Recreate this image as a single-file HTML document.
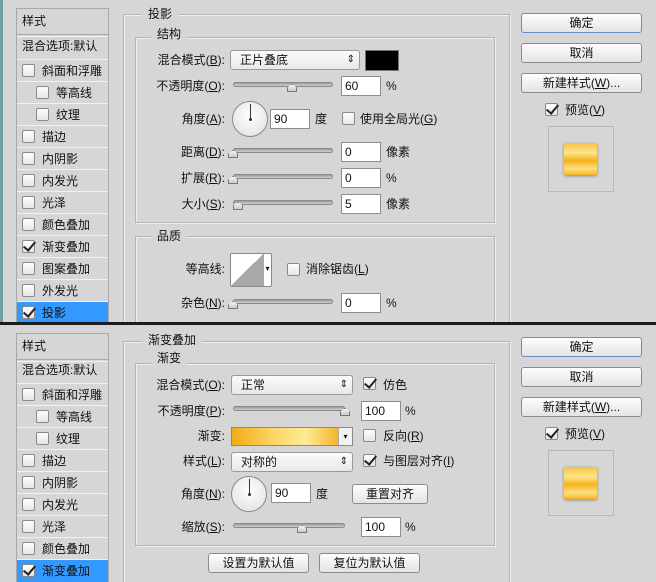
<!DOCTYPE html>
<html style="width:656px;height:582px;overflow:hidden"><head><meta charset="utf-8"><style>
*{margin:0;padding:0;box-sizing:border-box}
body{width:656px;height:582px;background:#d6d6d6;position:relative;overflow:hidden;font-family:"Liberation Sans","Noto Sans CJK SC",sans-serif;font-size:12px;color:#111}
.a{position:absolute}
.wrap{position:absolute;left:0;top:0;width:656px;height:582px;overflow:hidden}
.t{position:absolute;white-space:nowrap;line-height:14px;font-size:12px}
.r{text-align:right;width:120px}
.box{position:absolute;border:1px solid #b4b4b4;box-shadow:inset 1px 1px 0 #efefef,1px 1px 0 #efefef}
.gl{position:absolute;background:#d6d6d6;padding:0 6px;line-height:14px;font-size:12px}
.side{position:absolute;left:16px;width:93px;background:#d6d6d6;border:1px solid #a8a8a8}
.row{position:absolute;left:0;width:91px;height:22px;border-top:1px solid #f2f2f2}
.cb{position:absolute;width:13px;height:13px;border:1px solid #8a8a8a;border-radius:2px;background:linear-gradient(#fdfdfd,#e6e6e6)}
.ck::after{content:"";position:absolute;left:3px;top:-2px;width:5px;height:10px;border-right:2px solid #222;border-bottom:2px solid #222;transform:rotate(40deg)}
.inp{position:absolute;height:20px;background:#fff;border:1px solid #8e8e8e;padding-left:3px;line-height:18px;font-size:12px}
.sel{position:absolute;height:20px;background:linear-gradient(#fbfbfb,#e9e9e9);border:1px solid #9a9a9a;border-radius:3px;padding-left:9px;line-height:18px}
.sel::after{content:"⇕";position:absolute;right:4px;top:0;font-size:10px}
.sl{position:absolute;height:5px;border-radius:3px;background:linear-gradient(#9c9c9c,#cfcfcf);border:1px solid #8a8a8a}
.th{position:absolute;width:10px;height:8px;background:linear-gradient(#f4f4f4,#cacaca);border:1px solid #777;clip-path:polygon(50% 0,100% 45%,100% 100%,0 100%,0 45%)}
.btn{position:absolute;height:20px;border:1px solid #8c8c8c;border-radius:3px;background:linear-gradient(#fdfdfd,#e4e4e4);text-align:center;line-height:18px}
.dial{position:absolute;width:36px;height:36px;border-radius:50%;border:1px solid #8a8a8a;background:radial-gradient(circle at 50% 40%,#fff,#dedede)}
.dial::before{content:"";position:absolute;left:17px;top:2px;width:1px;height:15px;background:#333}
.dial::after{content:"";position:absolute;left:16px;top:16px;width:3px;height:3px;border-radius:50%;background:#333}
.gsw{position:absolute;width:33px;height:32px;background:linear-gradient(#f6c344,#fde58a 30%,#f5b21c 55%,#fde07e 80%,#f3b52a);box-shadow:0 1px 3px #888}
.pv{position:absolute;width:66px;height:66px;border:1px solid #b8b8b8}
u{text-decoration:underline}
</style></head><body>
<div class="wrap" style="clip-path:inset(0 0 260px 0)">
<div class="a" style="left:0;top:0;width:3px;height:322px;background:#6fa0a5"></div>

<div class="side" style="top:8px;height:320px">
 <div class="t" style="left:5px;top:5px">样式</div>
 <div class="a" style="left:0;top:25px;width:91px;border-top:1px solid #a8a8a8;border-bottom:1px solid #f2f2f2;height:3px"></div>
 <div class="t" style="left:5px;top:30px">混合选项:默认</div>
 <div class="row" style="top:50px"><div class="cb" style="left:5px;top:4px"></div><div class="t" style="left:25px;top:4px">斜面和浮雕</div></div>
 <div class="row" style="top:72px"><div class="cb" style="left:19px;top:4px"></div><div class="t" style="left:39px;top:4px">等高线</div></div>
 <div class="row" style="top:94px"><div class="cb" style="left:19px;top:4px"></div><div class="t" style="left:39px;top:4px">纹理</div></div>
 <div class="row" style="top:116px"><div class="cb" style="left:5px;top:4px"></div><div class="t" style="left:25px;top:4px">描边</div></div>
 <div class="row" style="top:138px"><div class="cb" style="left:5px;top:4px"></div><div class="t" style="left:25px;top:4px">内阴影</div></div>
 <div class="row" style="top:160px"><div class="cb" style="left:5px;top:4px"></div><div class="t" style="left:25px;top:4px">内发光</div></div>
 <div class="row" style="top:182px"><div class="cb" style="left:5px;top:4px"></div><div class="t" style="left:25px;top:4px">光泽</div></div>
 <div class="row" style="top:204px"><div class="cb" style="left:5px;top:4px"></div><div class="t" style="left:25px;top:4px">颜色叠加</div></div>
 <div class="row" style="top:226px"><div class="cb ck" style="left:5px;top:4px"></div><div class="t" style="left:25px;top:4px">渐变叠加</div></div>
 <div class="row" style="top:248px"><div class="cb" style="left:5px;top:4px"></div><div class="t" style="left:25px;top:4px">图案叠加</div></div>
 <div class="row" style="top:270px"><div class="cb" style="left:5px;top:4px"></div><div class="t" style="left:25px;top:4px">外发光</div></div>
 <div class="row" style="top:292px;background:#3399ff;height:30px"><div class="cb ck" style="left:5px;top:4px"></div><div class="t" style="left:25px;top:4px">投影</div></div>
</div>

<div class="box" style="left:123px;top:14px;width:387px;height:330px"></div>
<div class="gl" style="left:142px;top:7px">投影</div>
<div class="box" style="left:135px;top:37px;width:360px;height:186px"></div>
<div class="gl" style="left:151px;top:27px">结构</div>
<div class="t r" style="left:105px;top:53px">混合模式(<u>B</u>):</div>
<div class="sel" style="left:230px;top:50px;width:130px">正片叠底</div>
<div class="a" style="left:365px;top:50px;width:34px;height:21px;background:#000;border:1px solid #777"></div>
<div class="t r" style="left:105px;top:79px">不透明度(<u>O</u>):</div>
<div class="sl" style="left:233px;top:82px;width:100px"></div><div class="th" style="left:287px;top:84px"></div>
<div class="inp" style="left:341px;top:76px;width:40px">60</div><div class="t" style="left:386px;top:79px">%</div>
<div class="t r" style="left:105px;top:112px">角度(<u>A</u>):</div>
<div class="dial" style="left:232px;top:101px"></div>
<div class="inp" style="left:270px;top:109px;width:40px">90</div><div class="t" style="left:315px;top:112px">度</div>
<div class="cb" style="left:342px;top:112px"></div><div class="t" style="left:360px;top:112px">使用全局光(<u>G</u>)</div>
<div class="t r" style="left:105px;top:145px">距离(<u>D</u>):</div>
<div class="sl" style="left:233px;top:148px;width:100px"></div><div class="th" style="left:228px;top:150px"></div>
<div class="inp" style="left:341px;top:142px;width:40px">0</div><div class="t" style="left:386px;top:145px">像素</div>
<div class="t r" style="left:105px;top:171px">扩展(<u>R</u>):</div>
<div class="sl" style="left:233px;top:174px;width:100px"></div><div class="th" style="left:228px;top:176px"></div>
<div class="inp" style="left:341px;top:168px;width:40px">0</div><div class="t" style="left:386px;top:171px">%</div>
<div class="t r" style="left:105px;top:197px">大小(<u>S</u>):</div>
<div class="sl" style="left:233px;top:200px;width:100px"></div><div class="th" style="left:233px;top:202px"></div>
<div class="inp" style="left:341px;top:194px;width:40px">5</div><div class="t" style="left:386px;top:197px">像素</div>
<div class="box" style="left:135px;top:236px;width:360px;height:100px"></div>
<div class="gl" style="left:151px;top:229px">品质</div>
<div class="t r" style="left:105px;top:262px">等高线:</div>
<div class="a" style="left:230px;top:253px;width:42px;height:34px;border:1px solid #8a8a8a;border-radius:2px;background:#fff">
 <div class="a" style="left:0;top:0;width:32px;height:32px;background:linear-gradient(to bottom right,#fff 50%,#a8a8a8 50%)"></div>
 <div class="a" style="left:32px;top:0;width:8px;height:32px;border-left:1px solid #aaa;font-size:8px;line-height:30px;text-align:center">▾</div>
</div>
<div class="cb" style="left:287px;top:263px"></div><div class="t" style="left:306px;top:262px">消除锯齿(<u>L</u>)</div>
<div class="t r" style="left:105px;top:296px">杂色(<u>N</u>):</div>
<div class="sl" style="left:233px;top:299px;width:100px"></div><div class="th" style="left:228px;top:301px"></div>
<div class="inp" style="left:341px;top:293px;width:40px">0</div><div class="t" style="left:386px;top:296px">%</div>

<div class="btn" style="left:521px;top:13px;width:121px;border-color:#6a8fc4">确定</div>
<div class="btn" style="left:521px;top:43px;width:121px">取消</div>
<div class="btn" style="left:521px;top:73px;width:121px">新建样式(<u>W</u>)...</div>
<div class="cb ck" style="left:545px;top:103px"></div><div class="t" style="left:565px;top:103px">预览(<u>V</u>)</div>
<div class="pv" style="left:548px;top:126px"></div><div class="gsw" style="left:564px;top:143px"></div>
</div>

<div class="a" style="left:0;top:322px;width:656px;height:3px;background:#1c1c1c"></div>

<div class="wrap" style="clip-path:inset(325px 0 0 0)">
<div class="side" style="top:333px;height:250px">
 <div class="t" style="left:5px;top:5px">样式</div>
 <div class="a" style="left:0;top:25px;width:91px;border-top:1px solid #a8a8a8;border-bottom:1px solid #f2f2f2;height:3px"></div>
 <div class="t" style="left:5px;top:29px">混合选项:默认</div>
 <div class="row" style="top:49px"><div class="cb" style="left:5px;top:4px"></div><div class="t" style="left:25px;top:4px">斜面和浮雕</div></div>
 <div class="row" style="top:71px"><div class="cb" style="left:19px;top:4px"></div><div class="t" style="left:39px;top:4px">等高线</div></div>
 <div class="row" style="top:93px"><div class="cb" style="left:19px;top:4px"></div><div class="t" style="left:39px;top:4px">纹理</div></div>
 <div class="row" style="top:115px"><div class="cb" style="left:5px;top:4px"></div><div class="t" style="left:25px;top:4px">描边</div></div>
 <div class="row" style="top:137px"><div class="cb" style="left:5px;top:4px"></div><div class="t" style="left:25px;top:4px">内阴影</div></div>
 <div class="row" style="top:159px"><div class="cb" style="left:5px;top:4px"></div><div class="t" style="left:25px;top:4px">内发光</div></div>
 <div class="row" style="top:181px"><div class="cb" style="left:5px;top:4px"></div><div class="t" style="left:25px;top:4px">光泽</div></div>
 <div class="row" style="top:203px"><div class="cb" style="left:5px;top:4px"></div><div class="t" style="left:25px;top:4px">颜色叠加</div></div>
 <div class="row" style="top:225px;background:#3399ff;height:30px"><div class="cb ck" style="left:5px;top:4px"></div><div class="t" style="left:25px;top:4px">渐变叠加</div></div>
</div>

<div class="box" style="left:123px;top:341px;width:387px;height:250px"></div>
<div class="gl" style="left:142px;top:333px">渐变叠加</div>
<div class="box" style="left:135px;top:363px;width:360px;height:183px"></div>
<div class="gl" style="left:151px;top:351px">渐变</div>
<div class="t r" style="left:105px;top:378px">混合模式(<u>O</u>):</div>
<div class="sel" style="left:231px;top:375px;width:122px">正常</div>
<div class="cb ck" style="left:363px;top:377px"></div><div class="t" style="left:383px;top:378px">仿色</div>
<div class="t r" style="left:105px;top:404px">不透明度(<u>P</u>):</div>
<div class="sl" style="left:233px;top:406px;width:112px"></div><div class="th" style="left:340px;top:408px"></div>
<div class="inp" style="left:361px;top:401px;width:40px">100</div><div class="t" style="left:405px;top:404px">%</div>
<div class="t r" style="left:105px;top:429px">渐变:</div>
<div class="a" style="left:231px;top:427px;width:122px;height:19px;border:1px solid #8a8a8a;background:#fff">
 <div class="a" style="left:0;top:0;width:106px;height:17px;background:linear-gradient(to right,#f2ab14,#fdd66a 40%,#fdeb94 70%,#f5b52a)"></div>
 <div class="a" style="left:106px;top:0;width:14px;height:17px;border-left:1px solid #aaa;font-size:8px;line-height:17px;text-align:center;background:#f2f2f2">▾</div>
</div>
<div class="cb" style="left:363px;top:429px"></div><div class="t" style="left:383px;top:429px">反向(<u>R</u>)</div>
<div class="t r" style="left:105px;top:454px">样式(<u>L</u>):</div>
<div class="sel" style="left:231px;top:452px;width:122px">对称的</div>
<div class="cb ck" style="left:363px;top:454px"></div><div class="t" style="left:383px;top:454px">与图层对齐(<u>I</u>)</div>
<div class="t r" style="left:105px;top:487px">角度(<u>N</u>):</div>
<div class="dial" style="left:231px;top:476px"></div>
<div class="inp" style="left:271px;top:483px;width:40px">90</div><div class="t" style="left:316px;top:487px">度</div>
<div class="btn" style="left:352px;top:484px;width:76px">重置对齐</div>
<div class="t r" style="left:105px;top:520px">缩放(<u>S</u>):</div>
<div class="sl" style="left:233px;top:523px;width:112px"></div><div class="th" style="left:297px;top:525px"></div>
<div class="inp" style="left:361px;top:517px;width:40px">100</div><div class="t" style="left:405px;top:520px">%</div>
<div class="btn" style="left:208px;top:553px;width:101px">设置为默认值</div>
<div class="btn" style="left:319px;top:553px;width:101px">复位为默认值</div>

<div class="btn" style="left:521px;top:337px;width:121px;border-color:#6a8fc4">确定</div>
<div class="btn" style="left:521px;top:367px;width:121px">取消</div>
<div class="btn" style="left:521px;top:397px;width:121px">新建样式(<u>W</u>)...</div>
<div class="cb ck" style="left:545px;top:427px"></div><div class="t" style="left:565px;top:427px">预览(<u>V</u>)</div>
<div class="pv" style="left:548px;top:450px"></div><div class="gsw" style="left:564px;top:467px"></div>
</div>
</body></html>
